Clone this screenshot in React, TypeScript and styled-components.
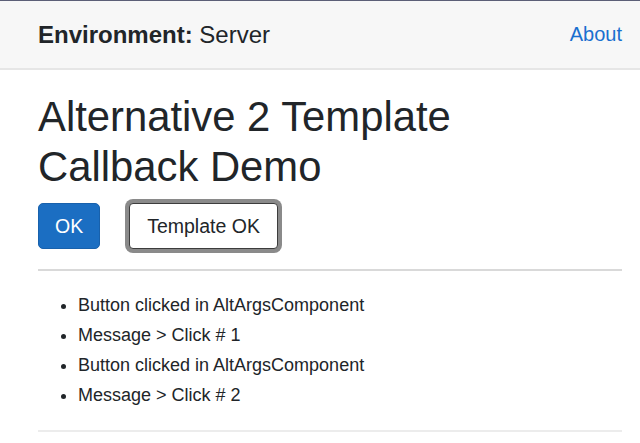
import React, { useState } from 'react'
import styled, { createGlobalStyle } from 'styled-components'

const GlobalStyle = createGlobalStyle`
  html, body {
    margin: 0;
    padding: 0;
    background: #fff;
  }
  body {
    font-family: 'Liberation Sans', Arial, sans-serif;
    color: #212529;
  }
`

export default function App() {
  const [messages, setMessages] = useState<string[]>([
    'Button clicked in AltArgsComponent',
    'Message > Click # 1',
    'Button clicked in AltArgsComponent',
    'Message > Click # 2',
  ])
  const [count, setCount] = useState(2)

  const onClick = () => {
    const next = count + 1
    setCount(next)
    setMessages([
      ...messages,
      'Button clicked in AltArgsComponent',
      `Message > Click # ${next}`,
    ])
  }

  return (
    <Page>
      <GlobalStyle />
      <TopRow>
        <Env>
          <strong>Environment:</strong> Server
        </Env>
        <NavLink href="#">About</NavLink>
      </TopRow>
      <Content>
        <Title>Alternative 2 Template Callback Demo</Title>
        <Buttons>
          <Button variant="primary" onClick={onClick}>
            OK
          </Button>
          <Button variant="focused" onClick={onClick}>
            Template OK
          </Button>
        </Buttons>
        <Rule />
        <Messages>
          {messages.map((m, i) => (
            <li key={i}>{m}</li>
          ))}
        </Messages>
        <Rule light />
      </Content>
    </Page>
  )
}

const Page = styled.div({
  minHeight: 443,
})

const TopRow = styled.div({
  display: 'flex',
  alignItems: 'center',
  justifyContent: 'space-between',
  height: 67,
  padding: '0 18px 0 38px',
  background: '#f7f7f7',
  borderTop: '1px solid #5c5f77',
  borderBottom: '2px solid #e6e6e6',
})

const Env = styled.div({
  fontSize: 24,
  color: '#212529',
  strong: {
    fontWeight: 700,
  },
})

const NavLink = styled.a({
  fontSize: 20,
  color: '#1a6fcf',
  textDecoration: 'none',
})

const Content = styled.div({
  padding: '22px 18px 0 38px',
})

const Title = styled.h1({
  fontSize: 41.8,
  lineHeight: '50px',
  fontWeight: 400,
  margin: '0 0 11px',
  maxWidth: 470,
})

const Buttons = styled.div({
  display: 'flex',
  alignItems: 'center',
  gap: 29,
  height: 46,
})

const Button = styled.button<{ variant: 'primary' | 'focused' }>(
  {
    fontFamily: "'Liberation Sans', Arial, sans-serif",
    fontSize: 19.5,
    height: 46,
    padding: '0 16px',
    borderRadius: 5,
    cursor: 'pointer',
  },
  ({ variant }) =>
    variant === 'primary'
      ? {
          background: '#1b6ec2',
          border: '1px solid #1861ac',
          color: '#fff',
        }
      : {
          background: '#fff',
          border: '1px solid #3d3d3d',
          color: '#212529',
          boxShadow: '0 0 0 4px #8a8a8a',
          borderRadius: 4,
          padding: '0 17px',
        },
)

const Rule = styled.hr<{ light?: boolean }>(({ light }) => ({
  border: 0,
  height: 2,
  margin: '20px 0 0',
  background: light ? '#ececec' : '#d9d9d9',
}))

const Messages = styled.ul({
  margin: '19px 0 0',
  paddingLeft: 40,
  fontSize: 18,
  lineHeight: '30px',
})
